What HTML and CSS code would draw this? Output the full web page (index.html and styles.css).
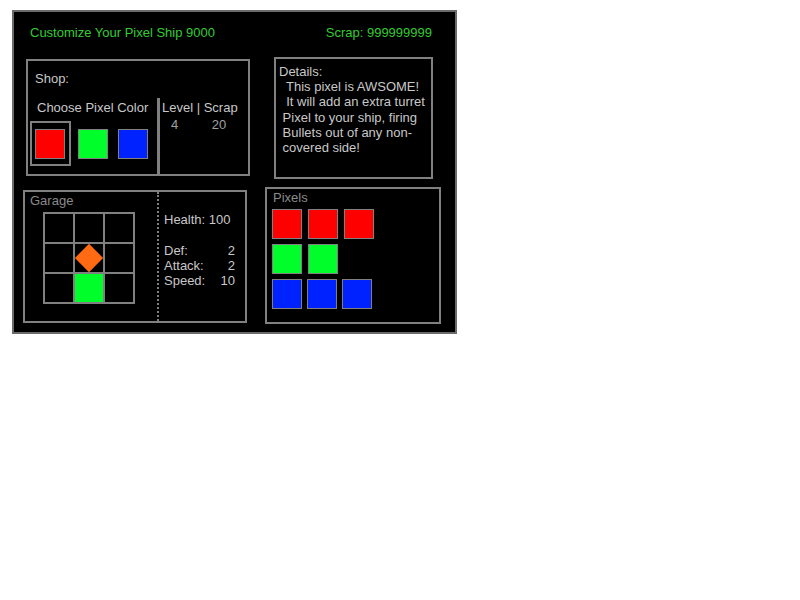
FILE: index.html
```html
<!DOCTYPE html>
<html lang="en">
    <head>
        <meta charset="UTF-8">
        <meta name="viewport" content="width=device-width, initial-scale=1.0">
        <title>Pixel Ship 9000</title>
        <link rel="stylesheet" href="styles.css">
    </head>
<body>
    <div class="frame">
        <div class="header">
            <span>Customize Your Pixel Ship 9000</span>
            <span>Scrap: 999999999</span>
        </div>

        <div class="row top-row">
            <div class="box shop">
                <div class="label">Shop:</div>
                <div class="shop-body">
                    <div class="shop-colors">
                        <div class="choose">Choose Pixel Color</div>
                        <div class="swatches">
                            <div class="picked"><div class="pixel red"></div></div>
                            <div class="pixel green"></div>
                            <div class="pixel blue"></div>
                        </div>
                    </div>
                    <div class="shop-divider"></div>
                    <div class="shop-level">
                        <div>Level | Scrap</div>
                        <div class="level-values">
                            <span class="lvl">4</span>
                            <span class="cost">20</span>
                        </div>
                    </div>
                </div>
            </div>

            <div class="box details">Details:
  This pixel is AWSOME!
  It will add an extra turret
 Pixel to your ship, firing
 Bullets out of any non-
 covered side!</div>
        </div>

        <div class="row bottom-row">
            <div class="box garage">
                <div class="garage-left">
                    <div class="label dim">Garage</div>
                    <div class="grid">
                        <div class="cell"></div>
                        <div class="cell"></div>
                        <div class="cell"></div>
                        <div class="cell"></div>
                        <div class="cell"><div class="core"></div></div>
                        <div class="cell"></div>
                        <div class="cell"></div>
                        <div class="cell green"></div>
                        <div class="cell"></div>
                    </div>
                </div>
                <div class="stats">
                    <div class="health">Health: 100</div>
                    <div class="stat"><span>Def:</span><span>2</span></div>
                    <div class="stat"><span>Attack:</span><span>2</span></div>
                    <div class="stat"><span>Speed:</span><span>10</span></div>
                </div>
            </div>

            <div class="box pixels">
                <div class="label dim">Pixels</div>
                <div class="pixel-row">
                    <div class="pixel red"></div>
                    <div class="pixel red"></div>
                    <div class="pixel red"></div>
                </div>
                <div class="pixel-row">
                    <div class="pixel green"></div>
                    <div class="pixel green"></div>
                </div>
                <div class="pixel-row tight">
                    <div class="pixel blue"></div>
                    <div class="pixel blue"></div>
                    <div class="pixel blue"></div>
                </div>
            </div>
        </div>
    </div>
</body>
</html>
```

FILE: styles.css
```css
body {
    margin: 10px 12px;
    font-family: "Liberation Sans", Arial, sans-serif;
    font-size: 13px;
    line-height: 15px;
    color: #c8c8c8;
    background-color: #fff;
}
.frame {
    width: 445px;
    height: 324px;
    box-sizing: border-box;
    background-color: #000;
    border: 2px solid #6b6b6b;
}
.header {
    height: 45px;
    box-sizing: border-box;
    padding: 13px 23px 0 16px;
    display: flex;
    justify-content: space-between;
    color: #33cc33;
}
.row {
    display: flex;
    align-items: flex-start;
}
.box {
    box-sizing: border-box;
    border: 2px solid #808080;
}
.label {
    white-space: nowrap;
}
.dim {
    color: #8a8a8a;
}

/* shop */
.shop {
    width: 224px;
    height: 117px;
    margin: 2px 0 0 12px;
    padding-top: 10px;
    display: flex;
    flex-direction: column;
}
.shop .label {
    padding-left: 7px;
}
.shop-body {
    flex: 1;
    display: flex;
    margin-top: 12px;
}
.shop-colors {
    width: 129px;
    padding: 2px 0 0 2px;
    box-sizing: border-box;
}
.choose {
    padding-left: 7px;
}
.swatches {
    display: flex;
    align-items: flex-start;
    margin-top: 6px;
}
.picked {
    border: 2px solid #808080;
    padding: 6px 4px 5px 3px;
    margin-right: 7px;
}
.swatches .green {
    margin: 8px 10px 0 0;
}
.swatches .blue {
    margin-top: 8px;
}
.shop-divider {
    width: 3px;
    background-color: #808080;
}
.shop-level {
    padding: 2px 0 0 2px;
}
.level-values {
    margin-top: 2px;
    color: #a0a0a0;
}
.lvl {
    margin-left: 9px;
}
.cost {
    margin-left: 30px;
}

/* pixels */
.pixel {
    width: 30px;
    height: 30px;
    box-sizing: border-box;
    border: 1px solid #808080;
    flex: none;
}
.red {
    background-color: #ff0000;
}
.green {
    background-color: #00ff2a;
}
.blue {
    background-color: #0022ff;
}

/* details */
.details {
    width: 159px;
    height: 122px;
    margin-left: 24px;
    padding: 5px 0 0 3px;
    white-space: pre;
    line-height: 15.2px;
}

/* garage */
.bottom-row {
    margin-top: 8px;
}
.garage {
    width: 224px;
    height: 133px;
    margin: 3px 0 0 9px;
    display: flex;
}
.garage-left {
    width: 134px;
    box-sizing: border-box;
    padding-left: 5px;
    border-right: 2px dotted #808080;
}
.garage .label {
    padding-top: 1px;
}
.grid {
    display: grid;
    grid-template-columns: repeat(3, 28px);
    grid-template-rows: repeat(3, 28px);
    gap: 2px;
    padding: 2px;
    width: max-content;
    background-color: #808080;
    margin: 4px 0 0 13px;
}
.cell {
    background-color: #000;
    display: flex;
    align-items: center;
    justify-content: center;
}
.cell.green {
    background-color: #00ff2a;
}
.core {
    width: 20px;
    height: 20px;
    background-color: #ff6a13;
    transform: rotate(45deg);
}
.stats {
    padding: 20px 0 0 5px;
}
.health {
    margin-bottom: 16px;
}
.stat {
    width: 71px;
    display: flex;
    justify-content: space-between;
}

/* pixels inventory */
.pixels {
    width: 176px;
    height: 137px;
    margin-left: 18px;
    padding: 1px 0 0 5px;
}
.pixels .label {
    padding-left: 1px;
    margin-bottom: 4px;
}
.pixel-row {
    display: flex;
    gap: 6px;
    margin-bottom: 5px;
}
.pixel-row.tight {
    gap: 5px;
}
```
